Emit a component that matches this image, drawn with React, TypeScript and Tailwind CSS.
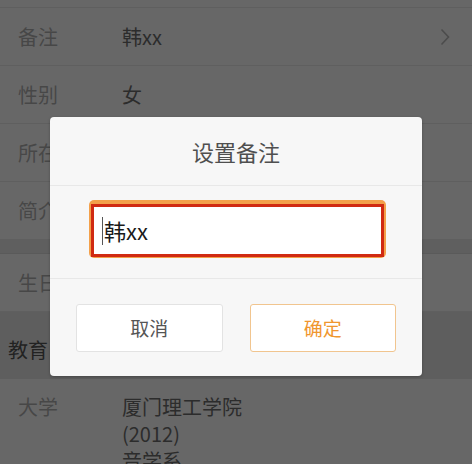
import React from 'react';

const font = { fontFamily: '"Noto Sans CJK SC", "Noto Sans", sans-serif' };

interface Row { label: string; value?: string; arrow?: boolean }

const topRows: Row[] = [
  { label: '备注', value: '韩xx', arrow: true },
  { label: '性别', value: '女' },
  { label: '所在地', value: '' },
  { label: '简介', value: '' },
];

function InfoRow({ row }: { row: Row }) {
  return (
    <div className="flex h-[58px] items-center border-b border-[#5f5f5f] pl-[18px] pr-[22px]">
      <div className="w-[104px] text-[20px] text-[#474747]">{row.label}</div>
      <div className="flex-1 text-[20px] text-[#2c2c2c]">{row.value}</div>
      {row.arrow && (
        <svg width="10" height="18" viewBox="0 0 10 18" className="mt-[1px]">
          <path d="M1.5 1.5 L8.5 9 L1.5 16.5" fill="none" stroke="#4c4c4c" strokeWidth="1.6" />
        </svg>
      )}
    </div>
  );
}

export default function App() {
  return (
    <div className="relative h-[464px] w-[472px] overflow-hidden bg-[#676767]" style={font}>
      <div className="h-[8px] border-b border-[#5f5f5f]" />
      {topRows.map(r => (
        <InfoRow key={r.label} row={r} />
      ))}
      <div className="h-[14px] border-b border-[#5a5a5a] bg-[#5f5f5f]" />
      <InfoRow row={{ label: '生日', value: '' }} />
      <div className="flex h-[67px] items-end bg-[#5e5e5e] pb-[14px] pl-[8px] text-[20px] text-[#222]">
        教育
      </div>
      <div className="flex pl-[18px] pt-[14px]">
        <div className="w-[104px] text-[20px] leading-[28px] text-[#474747]">大学</div>
        <div className="text-[20px] leading-[27px] text-[#2c2c2c]">
          <div>厦门理工学院</div>
          <div>(2012)</div>
          <div>音学系</div>
        </div>
      </div>

      {/* dialog */}
      <div className="absolute left-[50px] top-[117px] w-[372px] overflow-hidden rounded-[4px] bg-[#f7f7f7] shadow-[0_1px_3px_rgba(0,0,0,0.25)]">
        <div className="flex h-[69px] items-center justify-center border-b border-[#e8e8e8] text-[22px] text-[#4f4f4f]">
          设置备注
        </div>
        <div className="h-[93px] border-b border-[#e8e8e8] pl-[39px] pr-[36px] pt-[14px]">
          <div className="h-[58px] rounded-[5px] bg-[#f3a04a] px-[2px] pb-[1px] pt-[4px]">
            <div className="flex h-full items-center border-[3px] border-[#d02a12] bg-white pl-[8px]">
              <span className="mr-[1px] h-[28px] w-[1px] bg-[#555]" />
              <span className="text-[22px] text-[#1a1a1a]">韩xx</span>
            </div>
          </div>
        </div>
        <div className="flex gap-[27px] px-[26px] pb-[24px] pt-[25px]">
          <button className="flex h-[48px] flex-1 items-center justify-center rounded-[3px] border border-[#e3e3e3] bg-white text-[19px] text-[#555]">
            取消
          </button>
          <button className="flex h-[48px] flex-1 items-center justify-center rounded-[3px] border border-[#f1c58f] bg-white text-[19px] text-[#f0962e]">
            确定
          </button>
        </div>
      </div>
    </div>
  );
}
